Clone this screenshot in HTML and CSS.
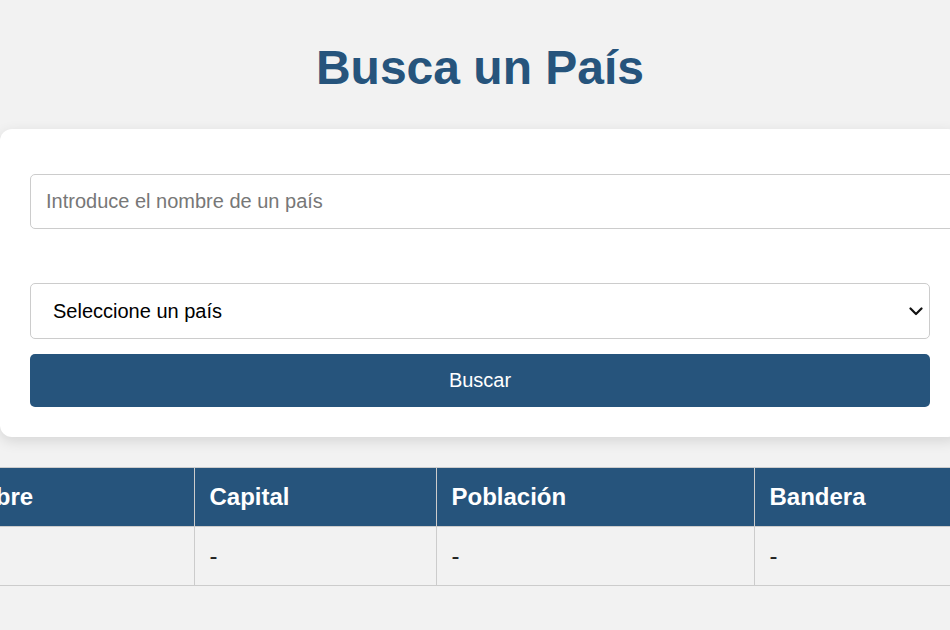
FILE: index.html
```html
<!DOCTYPE html>
<html lang="es">
<head>
<meta charset="utf-8">
<title>Busca un País</title>
<link rel="stylesheet" href="styles.css">
</head>
<body>
<div class="page">
  <h1 class="title">Busca un País</h1>
  <div class="card">
    <input class="search" type="text" placeholder="Introduce el nombre de un país">
    <div class="select-wrap">
      <select class="picker">
        <option>Seleccione un país</option>
      </select>
      <svg class="chev" width="14" height="9" viewBox="0 0 14 9" aria-hidden="true">
        <path d="M1.5 1.5 L7 7 L12.5 1.5" fill="none" stroke="#111" stroke-width="2.2" stroke-linecap="round" stroke-linejoin="round"/>
      </svg>
    </div>
    <button class="btn" type="button">Buscar</button>
  </div>
  <table class="results">
    <colgroup>
      <col class="c1"><col class="c2"><col class="c3"><col class="c4">
    </colgroup>
    <thead>
      <tr><th>Nombre</th><th>Capital</th><th>Población</th><th>Bandera</th></tr>
    </thead>
    <tbody>
      <tr><td></td><td>-</td><td>-</td><td>-</td></tr>
    </tbody>
  </table>
</div>
</body>
</html>
```

FILE: styles.css
```css
html, body {
  margin: 0;
  padding: 0;
  background: #f2f2f2;
  font-family: "Liberation Sans", Arial, sans-serif;
  overflow: hidden;
}

.page {
  width: 960px;
  padding-top: 40px;
  display: flex;
  flex-direction: column;
  align-items: center;
}

.title {
  margin: 0 0 34px;
  font-size: 48px;
  line-height: 55px;
  font-weight: bold;
  color: #26547c;
  text-align: center;
}

.card {
  width: 960px;
  box-sizing: border-box;
  padding: 30px;
  background: #ffffff;
  border-radius: 12px;
  box-shadow: 0 4px 14px rgba(0, 0, 0, 0.12);
  display: flex;
  flex-direction: column;
  align-items: flex-start;
}

.search {
  width: 900px;
  margin: 15px 0 54px;
  padding: 15px;
  border: 1px solid #cccccc;
  border-radius: 5px;
  font-family: inherit;
  font-size: 20px;
  line-height: 23px;
  color: #222;
  background: #fff;
  flex-shrink: 0;
}

.search::placeholder {
  color: #777777;
}

.select-wrap {
  position: relative;
  width: 900px;
}

.picker {
  display: block;
  width: 900px;
  height: 56px;
  padding: 0 40px 0 22px;
  border: 1px solid #cccccc;
  border-radius: 5px;
  font-family: inherit;
  font-size: 20px;
  color: #000;
  background: #fff;
  box-sizing: border-box;
  -webkit-appearance: none;
  appearance: none;
}

.chev {
  position: absolute;
  right: 7px;
  top: 24px;
  pointer-events: none;
}

.btn {
  width: 900px;
  margin-top: 15px;
  padding: 15px;
  border: none;
  border-radius: 5px;
  background: #26547c;
  color: #ffffff;
  font-family: inherit;
  font-size: 20px;
  line-height: 23px;
  cursor: pointer;
}

.results {
  flex-shrink: 0;
  width: 1106px;
  margin-top: 30px;
  border-collapse: collapse;
  table-layout: fixed;
  font-size: 24px;
}

.c1 { width: 267px; }
.c2 { width: 242px; }
.c3 { width: 318px; }
.c4 { width: 279px; }

.results th,
.results td {
  border: 1px solid #cccccc;
  padding: 15px;
  line-height: 28px;
  text-align: left;
}

.results th {
  background: #26547c;
  color: #ffffff;
  font-weight: bold;
}

.results td {
  color: #222222;
}
```
